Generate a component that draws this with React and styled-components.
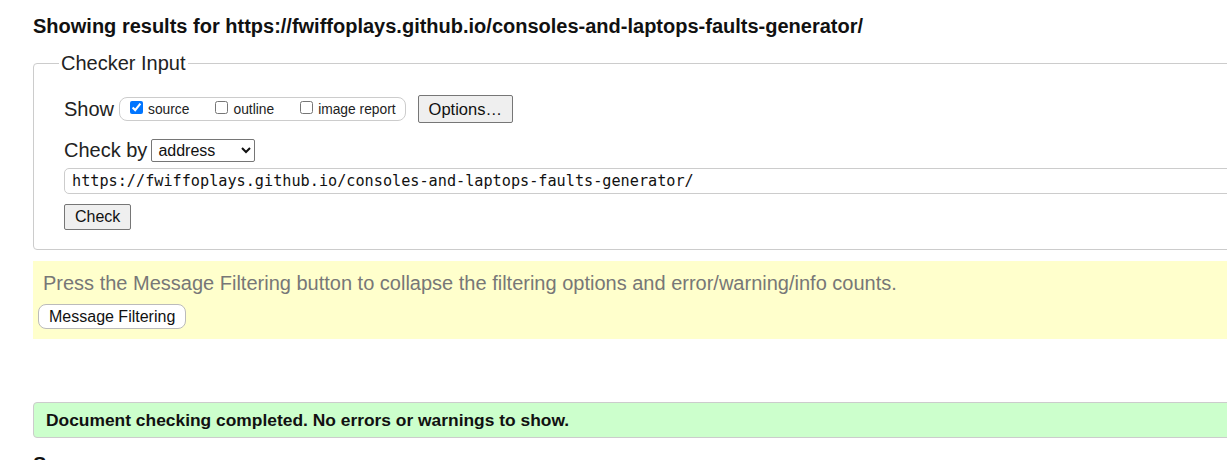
import styled, { createGlobalStyle } from "styled-components";

const Global = createGlobalStyle`
  html, body {
    margin: 0;
    padding: 0;
    overflow: hidden;
    background: #fff;
  }
  body {
    font-family: "Liberation Sans", Arial, sans-serif;
    color: #111;
  }
`;

const Page = styled.div`
  width: 1300px;
  padding: 14px 0 0 33px;
`;

const Heading = styled.h2`
  margin: 0;
  font-size: 20px;
  line-height: 24px;
  font-weight: bold;
  color: #111;
`;

const Fieldset = styled.fieldset`
  margin: 14px 0 0;
  padding: 6px 28px 19px 30px;
  border: 1px solid #ccc;
  border-radius: 4px;
`;

const Legend = styled.legend`
  font-size: 20px;
  padding: 0 2px;
  margin-left: -5px;
  color: #222;
`;

const Row = styled.div`
  display: flex;
  align-items: center;
  gap: ${(p) => p.$gap || 6}px;
  margin-top: ${(p) => p.$top || 0}px;
`;

const Label = styled.span`
  font-size: 20px;
  color: #222;
`;

const Pill = styled.div`
  display: flex;
  align-items: center;
  gap: 26px;
  height: 22px;
  padding: 0 9px 0 10px;
  border: 1px solid #ccc;
  border-radius: 8px;
`;

const Option = styled.label`
  display: flex;
  align-items: center;
  gap: 5px;
  font-size: 13.8px;
  color: #222;
  line-height: 1;
  padding-top: 2px;
`;

const Box = styled.input`
  width: 13px;
  height: 13px;
  margin: -4px 0 0;
  accent-color: #0075ff;
`;

const Button = styled.button`
  font-family: "Liberation Sans", Arial, sans-serif;
  font-size: ${(p) => p.$size || 16}px;
  height: ${(p) => p.$h || 26}px;
  padding: 0 ${(p) => p.$pad || 10}px;
  color: #111;
  background: ${(p) => (p.$plain ? "#fff" : "#efefef")};
  border: 1px solid ${(p) => (p.$plain ? "#bbb" : "#767676")};
  border-radius: ${(p) => (p.$plain ? 8 : 2)}px;
`;

const Select = styled.select`
  font-family: "Liberation Sans", Arial, sans-serif;
  font-size: 16px;
  width: 104px;
  height: 23px;
  padding: 0 2px;
  color: #111;
  background: #fff;
  border: 1px solid #767676;
  border-radius: 2px;
`;

const UrlInput = styled.input`
  display: block;
  box-sizing: border-box;
  width: 1240px;
  height: 26px;
  margin-top: 6px;
  padding: 0 7px;
  font-family: "DejaVu Sans Mono", "Liberation Mono", monospace;
  font-size: 15.2px;
  color: #111;
  border: 1px solid #ccc;
  border-radius: 5px;
`;

const Notice = styled.div`
  margin-top: 11px;
  padding: 10px 5px 10px;
  background: #ffffcc;
`;

const NoticeText = styled.p`
  margin: 0 0 0 5px;
  font-size: 20px;
  line-height: 24px;
  color: #777;
`;

const Success = styled.div`
  margin-top: 63px;
  padding: 0 12px;
  height: 34px;
  display: flex;
  align-items: center;
  background: #ccffcc;
  border: 1px solid #ccc;
  border-radius: 4px;
  font-size: 17.4px;
  font-weight: bold;
  color: #111;
`;

const SubHeading = styled.h3`
  margin: 15px 0 0;
  font-size: 20px;
  font-weight: bold;
  color: #111;
`;

const url = "https://fwiffoplays.github.io/consoles-and-laptops-faults-generator/";

export default function App() {
  return (
    <Page>
      <Global />
      <Heading>Showing results for {url}</Heading>
      <Fieldset>
        <Legend>Checker Input</Legend>
        <Row $top={14} $gap={5}>
          <Label>Show</Label>
          <Pill>
            <Option>
              <Box type="checkbox" defaultChecked /> source
            </Option>
            <Option>
              <Box type="checkbox" /> outline
            </Option>
            <Option>
              <Box type="checkbox" /> image report
            </Option>
          </Pill>
          <Button $h={28} $pad={10} $size={16.5} style={{ marginLeft: 7 }}>
            Options…
          </Button>
        </Row>
        <Row $top={16} $gap={4}>
          <Label>Check by</Label>
          <Select defaultValue="address">
            <option value="address">address</option>
            <option value="upload">file upload</option>
            <option value="input">text input</option>
          </Select>
        </Row>
        <UrlInput defaultValue={url} />
        <Row $top={10}>
          <Button $pad={10}>Check</Button>
        </Row>
      </Fieldset>
      <Notice>
        <NoticeText>
          Press the Message Filtering button to collapse the filtering options and
          error/warning/info counts.
        </NoticeText>
        <Row $top={9}>
          <Button $plain $h={25} $pad={10}>
            Message Filtering
          </Button>
        </Row>
      </Notice>
      <Success>Document checking completed. No errors or warnings to show.</Success>
      <SubHeading>Source</SubHeading>
    </Page>
  );
}
